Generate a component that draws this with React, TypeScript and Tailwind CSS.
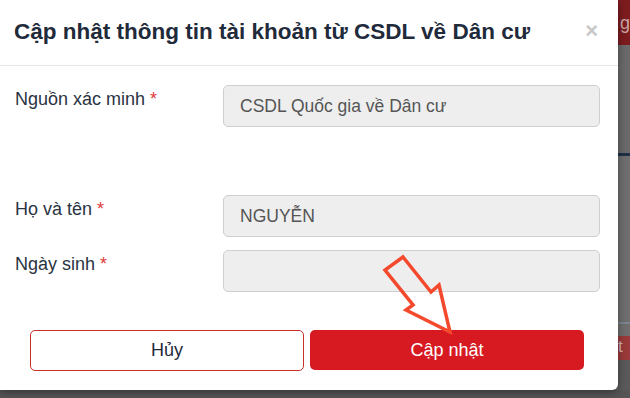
import React from 'react';

const font = { fontFamily: '"Liberation Sans", Arial, sans-serif' };

const Field = ({ label, value }: { label: string; value?: string }) => (
  <div className="flex items-start">
    <label className="w-[208px] shrink-0 pt-[1px] text-[18px] text-[#2a3342]">
      {label} <span className="text-[#e03a3a]">*</span>
    </label>
    <div className="flex h-[42px] w-[377px] items-center rounded-[5px] border border-[#cfcfcf] bg-[#eeeeee] px-4 text-[17.5px] text-[#555]">
      {value}
    </div>
  </div>
);

export default function App() {
  return (
    <div className="relative h-[398px] w-[630px] overflow-hidden bg-[#6b6b6b]" style={font}>
      {/* backdrop strip on the right */}
      <div className="absolute right-0 top-0 flex h-full w-[12px] flex-col overflow-hidden">
        <div className="h-[45px] bg-[#7d1c1f] pl-[2px] pt-[14px] text-[18px] leading-none text-[#c9a5a5]">g</div>
        <div className="h-[108px] bg-[#6a6a6a]" />
        <div className="h-[3px] bg-[#1f3047]" />
        <div className="h-[166px] bg-[#6e6e6e]" />
        <div className="h-[2px] bg-[#7a8590]" />
        <div className="h-[12px] bg-[#6e6e6e]" />
        <div className="h-[24px] bg-[#9a3a3a] pt-[2px] text-[17px] leading-none text-[#d9b3b3]">t</div>
        <div className="flex-1 bg-[#5a5a5a]" />
      </div>
      <div className="absolute bottom-0 left-0 h-[8px] w-full bg-[#555]" />

      {/* modal */}
      <div className="relative flex h-[390px] w-[618px] flex-col rounded-br-[6px] bg-white shadow-[0_2px_8px_rgba(0,0,0,0.4)]">
        <div className="flex h-[66px] items-center justify-between border-b border-[#e5e5e5] pl-[14px] pr-[20px]">
          <h1 className="pb-[2px] text-[22.5px] font-bold text-[#1f2a3a]">
            Cập nhật thông tin tài khoản từ CSDL về Dân cư
          </h1>
          <span className="mb-[4px] text-[22px] font-bold leading-none text-[#c8c8c8]">×</span>
        </div>

        <div className="flex flex-col pl-[15px] pt-[19px]">
          <Field label="Nguồn xác minh" value="CSDL Quốc gia về Dân cư" />
          <div className="h-[68px]" />
          <Field label="Họ và tên" value="NGUYỄN" />
          <div className="h-[13px]" />
          <Field label="Ngày sinh" />
        </div>

        <div className="mt-[38px] flex gap-[6px] pl-[30px]">
          <button className="h-[41px] w-[274px] rounded-[5px] border border-[#c9302c] bg-white text-[18px] text-[#1f2a3a]">
            Hủy
          </button>
          <button className="h-[40px] w-[274px] rounded-[5px] bg-[#d71a21] text-[18px] text-white">
            Cập nhật
          </button>
        </div>
      </div>

      {/* annotation arrow */}
      <svg className="pointer-events-none absolute left-0 top-0" width="630" height="398">
        <polygon
          points="403,257 431,292 439,285 450,332 406,310 413,305 385,270"
          fill="none"
          stroke="#f4492d"
          strokeWidth="3.5"
          strokeLinejoin="miter"
        />
      </svg>
    </div>
  );
}
